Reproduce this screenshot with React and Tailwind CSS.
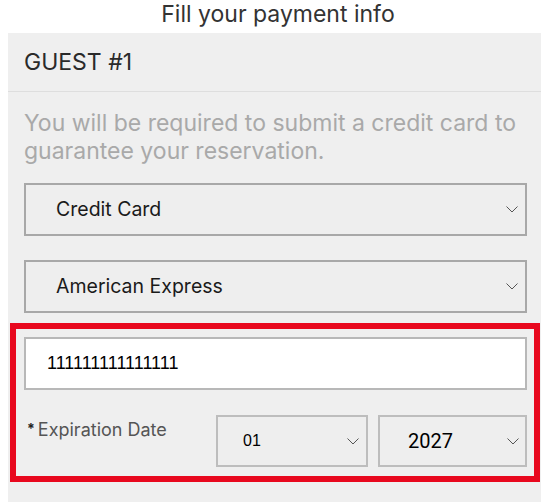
import React from "react";

function Chevron({ className = "" }) {
  return (
    <svg width="12" height="7" viewBox="0 0 12 7" className={className} fill="none">
      <path d="M0.5 0.5 L6 6 L11.5 0.5" stroke="#555" strokeWidth="1" />
    </svg>
  );
}

export default function App() {
  return (
    <div className="w-[556px] h-[502px] bg-white overflow-hidden font-['Inter',sans-serif]">
      <div className="h-[33px] flex items-start justify-center text-[23px] text-[#333] leading-[28px]">
        Fill your payment info
      </div>
      <div className="ml-[8px] w-[533px] h-[469px] bg-[#efefef]">
        <div className="h-[59px] flex items-center pl-[16px] text-[23px] text-[#2a2a2a] border-b border-[#dedede]">
          GUEST #1
        </div>
        <div className="pl-[16px] pr-[14px]">
          <p className="pt-[17px] text-[23px] leading-[28px] text-[#a9a9a9]">
            You will be required to submit a credit card to guarantee your reservation.
          </p>
          <div className="mt-[18px] h-[53px] border-2 border-[#a8a8a8] bg-[#eeeeee] flex items-center justify-between pl-[30px] pr-[7px] text-[19.5px] text-[#1a1a1a]">
            <span>Credit Card</span>
            <Chevron />
          </div>
          <div className="mt-[24px] h-[53px] border-2 border-[#a8a8a8] bg-[#eeeeee] flex items-center justify-between pl-[30px] pr-[7px] text-[19.5px] text-[#1a1a1a]">
            <span>American Express</span>
            <Chevron />
          </div>
          <div className="mt-[10px] ml-[-14px] mr-[-13px] h-[159px] border-[6px] border-[#e8081e] pl-[8px] pr-[7px] pt-[8px]">
            <div className="h-[53px] border-2 border-[#b8b8b8] bg-white flex items-center pl-[21px] text-[18px] font-['Liberation_Sans',sans-serif] text-black">
              111111111111111
            </div>
            <div className="mt-[25px] flex">
              <div className="w-[192px] pt-[5px] pl-[3px] text-[18px] text-[#555] flex items-start">
                <span className="text-[14px] text-[#222] font-bold mr-[3px] leading-none mt-[2px]">*</span>
                <span className="leading-[20px]">Expiration Date</span>
              </div>
              <div className="w-[152px] h-[52px] border-2 border-[#bdbdbd] bg-[#eeeeee] flex items-center justify-between pl-[25px] pr-[7px] text-[16px] text-black font-['Liberation_Sans',sans-serif]">
                <span>01</span>
                <Chevron />
              </div>
              <div className="ml-[10px] w-[149px] h-[52px] border-2 border-[#bdbdbd] bg-[#eeeeee] flex items-center justify-between pl-[28px] pr-[6px] text-[20px] text-black font-['Roboto',sans-serif]">
                <span>2027</span>
                <Chevron />
              </div>
            </div>
          </div>
        </div>
      </div>
    </div>
  );
}
